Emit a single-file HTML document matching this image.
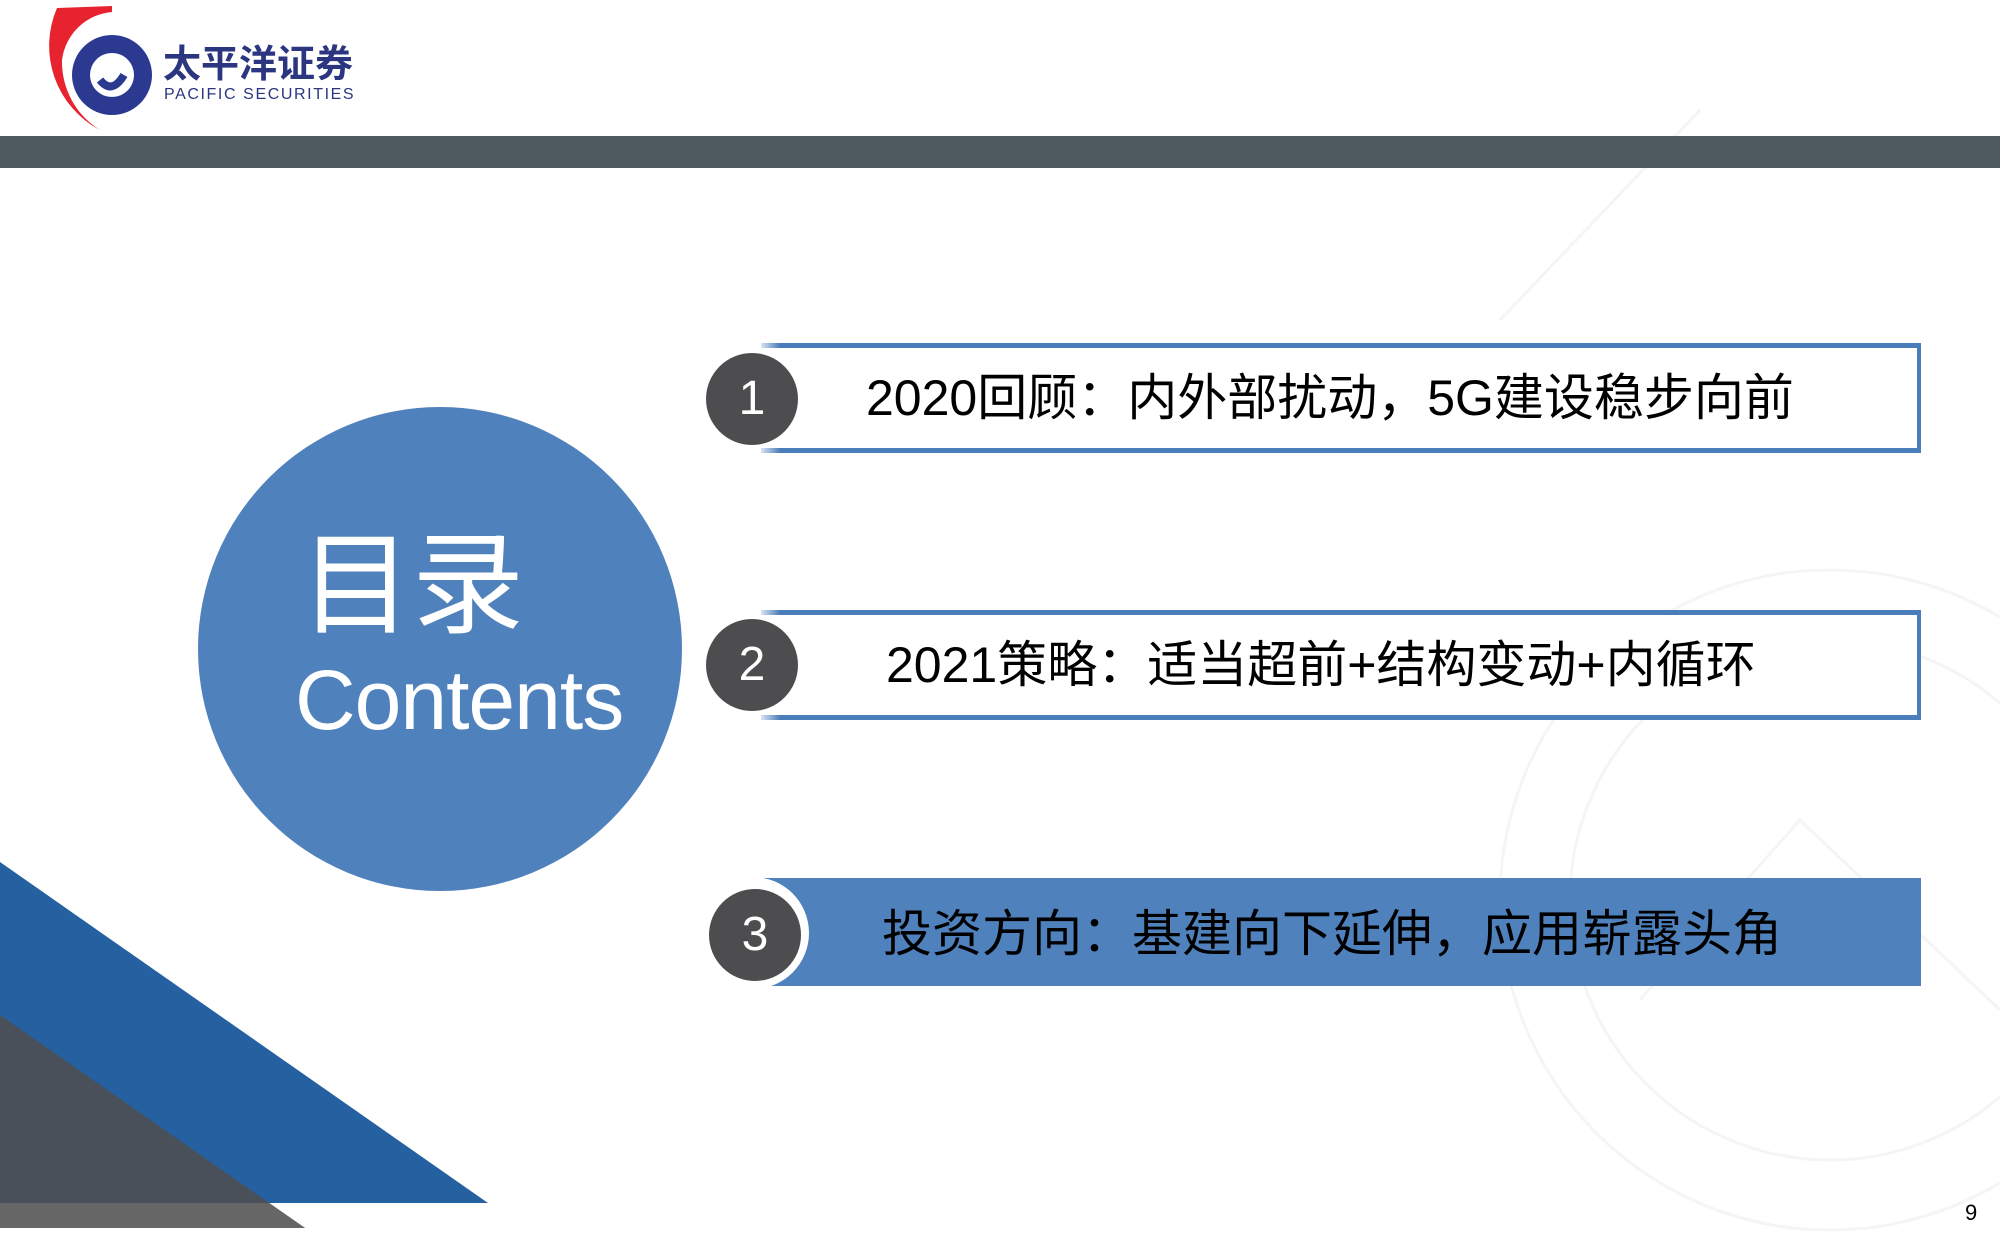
<!DOCTYPE html>
<html><head><meta charset="utf-8"><style>
*{margin:0;padding:0;box-sizing:border-box}
body{width:2000px;height:1250px;position:relative;overflow:hidden;background:#fff;font-family:"Liberation Sans","Noto Sans CJK SC",sans-serif}
.abs{position:absolute}
.bar{left:0;top:136px;width:2000px;height:32px;background:#4f5a60}
.row{position:absolute;left:761px;width:1160px;height:110px;border-top:5px solid #4a7ebb;border-bottom:5px solid #4a7ebb;border-right:4px solid #4a7ebb;background:#fff}
.txt{position:absolute;font-size:50px;color:#000;white-space:nowrap;line-height:1}
.num{position:absolute;width:92px;height:92px;border-radius:50%;background:#4d4d4f;color:#fff;font-size:48px;text-align:center;line-height:92px}
</style></head><body>
<svg class="abs" style="left:0;top:0" width="2000" height="1250">
<g fill="none" stroke="#f5f5f5" stroke-width="3">
<circle cx="1830" cy="900" r="330"/><circle cx="1830" cy="900" r="260"/>
<path d="M1500 320 L1700 110"/><path d="M1640 1000 L1800 820 L2000 1010"/>
</g>
<path d="M57 8 A95 95 0 0 0 100 130 A80 80 0 0 1 62 60 A55 55 0 0 1 112 12 L112 6 Z" fill="#e82330"/>
<circle cx="112" cy="75" r="40" fill="#2b3990"/>
<circle cx="112" cy="75" r="22" fill="#fff"/>
<path d="M100 80 Q112 95 124 75" stroke="#2b3990" stroke-width="8" fill="none"/>
</svg>
<div class="abs" style="left:163px;top:46px;font-size:38px;font-weight:bold;color:#2b3580;letter-spacing:0px;line-height:1">太平洋证券</div>
<div class="abs" style="left:164px;top:87px;font-size:16px;color:#2b3580;letter-spacing:1.6px;line-height:1">PACIFIC SECURITIES</div>
<div class="abs bar"></div>

<div class="abs" style="left:198px;top:407px;width:484px;height:484px;border-radius:50%;background:#4f81bd"></div>
<div class="abs" style="left:300px;top:530px;font-size:112px;color:#fff;line-height:1">目录</div>
<div class="abs" style="left:295px;top:658px;font-size:84px;color:#fff;line-height:1;letter-spacing:-1px">Contents</div>

<svg class="abs" style="left:0;top:0" width="2000" height="1250">
<polygon points="0,862 488,1203 0,1203" fill="#2560a0"/>
<polygon points="0,1015 305,1228 0,1228" fill="#4a5059"/>
<polygon points="0,1203 269,1203 305,1228 0,1228" fill="#666"/>
</svg>

<div class="row" style="top:343px"></div>
<div class="abs" style="left:740px;top:343px;width:40px;height:110px;background:linear-gradient(90deg,#fff 40%,rgba(255,255,255,0))"></div>
<div class="num" style="left:706px;top:353px">1</div>
<div class="txt" style="left:866px;top:373px">2020回顾：内外部扰动，5G建设稳步向前</div>

<div class="row" style="top:610px"></div>
<div class="abs" style="left:740px;top:610px;width:40px;height:110px;background:linear-gradient(90deg,#fff 40%,rgba(255,255,255,0))"></div>
<div class="num" style="left:706px;top:619px">2</div>
<div class="txt" style="left:886px;top:640px">2021策略：适当超前+结构变动+内循环</div>

<div class="abs" style="left:744px;top:878px;width:1177px;height:108px;background:#4f81bd"></div>
<div class="abs" style="left:697px;top:877px;width:112px;height:112px;border-radius:50%;background:#fff"></div>
<div class="num" style="left:709px;top:889px">3</div>
<div class="txt" style="left:882px;top:909px">投资方向：基建向下延伸，应用崭露头角</div>

<div class="abs" style="left:1965px;top:1200px;font-size:22px;color:#000">9</div>
</body></html>
